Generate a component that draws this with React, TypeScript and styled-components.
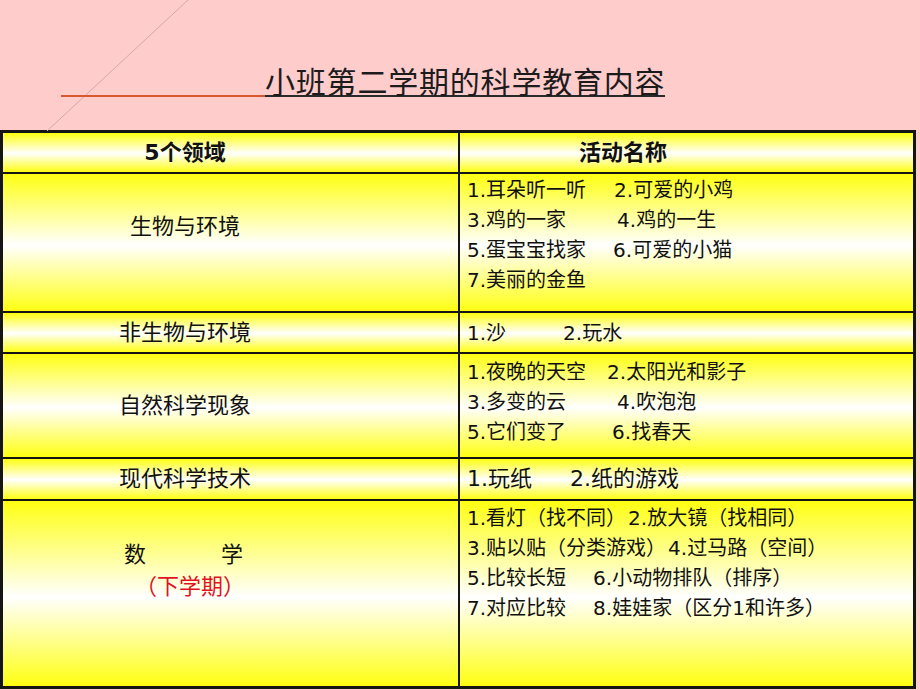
import React from "react";
import styled, { createGlobalStyle } from "styled-components";

const GlobalStyle = createGlobalStyle`
  html, body { margin: 0; padding: 0; }
  body {
    background: #ffcccc;
    width: 920px;
    height: 690px;
    overflow: hidden;
    font-family: "DejaVu Sans", "Noto Sans CJK SC", sans-serif;
    color: #111;
  }
`;

const Page = styled.div`
  position: relative;
  width: 920px;
  height: 690px;
  background: #ffcccc;
  display: flex;
  flex-direction: column;
`;

const Diagonal = styled.svg`
  position: absolute;
  left: 0;
  top: 0;
  pointer-events: none;
`;

const TitleBar = styled.div`
  position: relative;
  display: flex;
  align-items: flex-end;
  height: 97px;
  box-sizing: border-box;
  padding: 65px 0 0 61px;
`;

const Rule = styled.div`
  width: 204px;
  height: 2px;
  background: #d8582f;
`;

const Title = styled.h1`
  margin: 0;
  font-family: "Noto Sans CJK SC", sans-serif;
  font-weight: 400;
  font-size: 30px;
  line-height: 30px;
  letter-spacing: 0.8px;
  color: #1c1c1c;
  border-bottom: 2px solid #2a2a2a;
`;

const Table = styled.div`
  margin-top: 33px;
  width: 916px;
  box-sizing: border-box;
  border: 3px solid #151515;
  background: #151515;
  display: grid;
  grid-template-columns: 455px 453px;
  grid-template-rows: 39px 137px 39px 103px 40px 185px;
  gap: 2px;
`;

const Cell = styled.div<{ $top?: number }>`
  box-sizing: border-box;
  background: linear-gradient(
    to bottom,
    #ffff12 0%,
    #ffffff 52%,
    #ffff12 100%
  );
  display: flex;
  flex-direction: column;
  justify-content: ${(p) => (p.$top != null ? "flex-start" : "center")};
  padding-top: ${(p) => p.$top ?? 0}px;
`;

const AreaCell = styled(Cell)`
  align-items: center;
  padding-right: 91px;
  font-size: 22px;
  line-height: 30px;
`;

const HeadCell = styled(Cell)<{ $padRight: number }>`
  align-items: center;
  padding-right: ${(p) => p.$padRight}px;
  font-size: 22px;
  line-height: 30px;
  font-weight: 700;
`;

const ActivityCell = styled(Cell)<{ $size?: number }>`
  padding-left: 7px;
  font-size: ${(p) => p.$size ?? 20}px;
  line-height: 30px;
`;

const Line = styled.div`
  display: flex;
  white-space: nowrap;
`;

const Item = styled.span<{ $gap?: number }>`
  margin-left: ${(p) => p.$gap ?? 0}px;
`;

const SpacedWord = styled.div`
  display: flex;
  gap: 75px;
  margin-right: 3px;
`;

const Note = styled.div`
  color: #e0141e;
  margin-top: 2px;
  margin-left: 10px;
`;

type Row = {
  area: React.ReactNode;
  areaTop?: number;
  actTop?: number;
  actSize?: number;
  lines: [string, number?, string?][];
};

const rows: Row[] = [
  {
    area: "生物与环境",
    areaTop: 38,
    actTop: 1,
    lines: [
      ["1.耳朵听一听", 28, "2.可爱的小鸡"],
      ["3.鸡的一家", 51, "4.鸡的一生"],
      ["5.蛋宝宝找家", 27, "6.可爱的小猫"],
      ["7.美丽的金鱼"],
    ],
  },
  {
    area: "非生物与环境",
    lines: [["1.沙", 57, "2.玩水"]],
  },
  {
    area: "自然科学现象",
    actTop: 3,
    lines: [
      ["1.夜晚的天空", 21, "2.太阳光和影子"],
      ["3.多变的云", 51, "4.吹泡泡"],
      ["5.它们变了", 46, "6.找春天"],
    ],
  },
  {
    area: "现代科学技术",
    actSize: 22,
    lines: [["1.玩纸", 38, "2.纸的游戏"]],
  },
  {
    area: (
      <>
        <SpacedWord>
          <span>数</span>
          <span>学</span>
        </SpacedWord>
        <Note>（下学期）</Note>
      </>
    ),
    areaTop: 39,
    actTop: 2,
    lines: [
      ["1.看灯（找不同）", 2, "2.放大镜（找相同）"],
      ["3.贴以贴（分类游戏）", 2, "4.过马路（空间）"],
      ["5.比较长短", 27, "6.小动物排队（排序）"],
      ["7.对应比较", 27, "8.娃娃家（区分1和许多）"],
    ],
  },
];

export default function App() {
  return (
    <>
      <GlobalStyle />
      <Page>
        <Diagonal width="920" height="132" viewBox="0 0 920 132">
          <line x1="188" y1="0" x2="47" y2="131" stroke="#cfa9a9" strokeWidth="1" />
        </Diagonal>
        <TitleBar>
          <Rule />
          <Title>小班第二学期的科学教育内容</Title>
        </TitleBar>
        <Table>
          <HeadCell $padRight={91}>5个领域</HeadCell>
          <HeadCell $padRight={127}>活动名称</HeadCell>
          {rows.map((r, i) => (
            <React.Fragment key={i}>
              <AreaCell $top={r.areaTop}>{r.area}</AreaCell>
              <ActivityCell $top={r.actTop} $size={r.actSize}>
                {r.lines.map(([a, gap, b], j) => (
                  <Line key={j}>
                    <Item>{a}</Item>
                    {b && <Item $gap={gap}>{b}</Item>}
                  </Line>
                ))}
              </ActivityCell>
            </React.Fragment>
          ))}
        </Table>
      </Page>
    </>
  );
}
